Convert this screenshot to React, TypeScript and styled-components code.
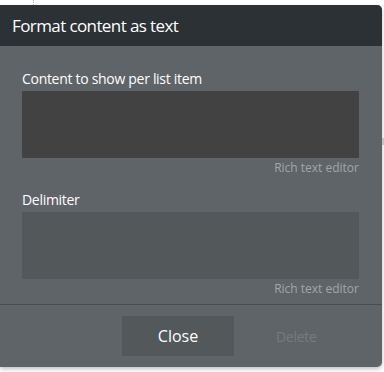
import React from "react";
import { styled, createGlobalStyle } from "styled-components";

const GlobalStyle = createGlobalStyle`
  html, body {
    margin: 0;
    padding: 0;
    background: #ffffff;
    font-family: "Open Sans", "Liberation Sans", sans-serif;
  }
`;

const Page = styled.div`
  position: relative;
  width: 384px;
  height: 372px;
  padding-top: 5px;
  box-sizing: border-box;
`;

const Guide = styled.div`
  position: absolute;
  left: 33px;
  top: 0;
  height: 5px;
  border-left: 1px dotted #b8b8b8;
`;

const EdgeMark = styled.div`
  position: absolute;
  right: 0;
  top: 138px;
  width: 2px;
  height: 7px;
  background: #c4c4c4;
`;

const Panel = styled.div`
  width: 382px;
  height: 362px;
  display: flex;
  flex-direction: column;
  background: #5f6468;
  border-radius: 0 5px 5px 0;
  box-shadow: 0 2px 4px rgba(0, 0, 0, 0.25);
  overflow: hidden;
`;

const Header = styled.div`
  height: 41px;
  display: flex;
  align-items: center;
  padding-left: 12px;
  background: #2b3134;
  color: #ffffff;
  font-size: 17px;
  letter-spacing: -0.6px;
`;

const Body = styled.div`
  display: flex;
  flex-direction: column;
  padding: 24px 23px 0 22px;
  gap: 13px;
  flex: 1;
`;

const Field = styled.div`
  display: flex;
  flex-direction: column;
`;

const Label = styled.div`
  color: #ffffff;
  font-size: 14px;
  font-weight: 500;
  letter-spacing: -0.3px;
  line-height: 18px;
  margin-bottom: 3px;
`;

const Editor = styled.div<{ $tone: string }>`
  height: 67px;
  background: ${(p) => p.$tone};
  border-radius: 1px;
`;

const Hint = styled.div`
  align-self: flex-end;
  color: #a2a6a9;
  font-size: 12px;
  line-height: 20px;
`;

const Footer = styled.div`
  height: 62px;
  border-top: 1px solid #494d50;
  display: flex;
  align-items: center;
  padding-left: 122px;
  gap: 42px;
`;

const CloseButton = styled.button`
  width: 112px;
  height: 40px;
  border: none;
  background: #53585a;
  color: #ffffff;
  font-family: inherit;
  font-size: 16px;
  cursor: pointer;
`;

const DeleteLink = styled.span`
  color: #767b7f;
  font-size: 14px;
  letter-spacing: -0.3px;
`;

export default function App() {
  return (
    <>
      <GlobalStyle />
      <Page>
        <Guide />
        <EdgeMark />
        <Panel>
          <Header>Format content as text</Header>
          <Body>
            <Field>
              <Label>Content to show per list item</Label>
              <Editor $tone="#424242" />
              <Hint>Rich text editor</Hint>
            </Field>
            <Field>
              <Label>Delimiter</Label>
              <Editor $tone="#53585b" />
              <Hint>Rich text editor</Hint>
            </Field>
          </Body>
          <Footer>
            <CloseButton>Close</CloseButton>
            <DeleteLink>Delete</DeleteLink>
          </Footer>
        </Panel>
      </Page>
    </>
  );
}
